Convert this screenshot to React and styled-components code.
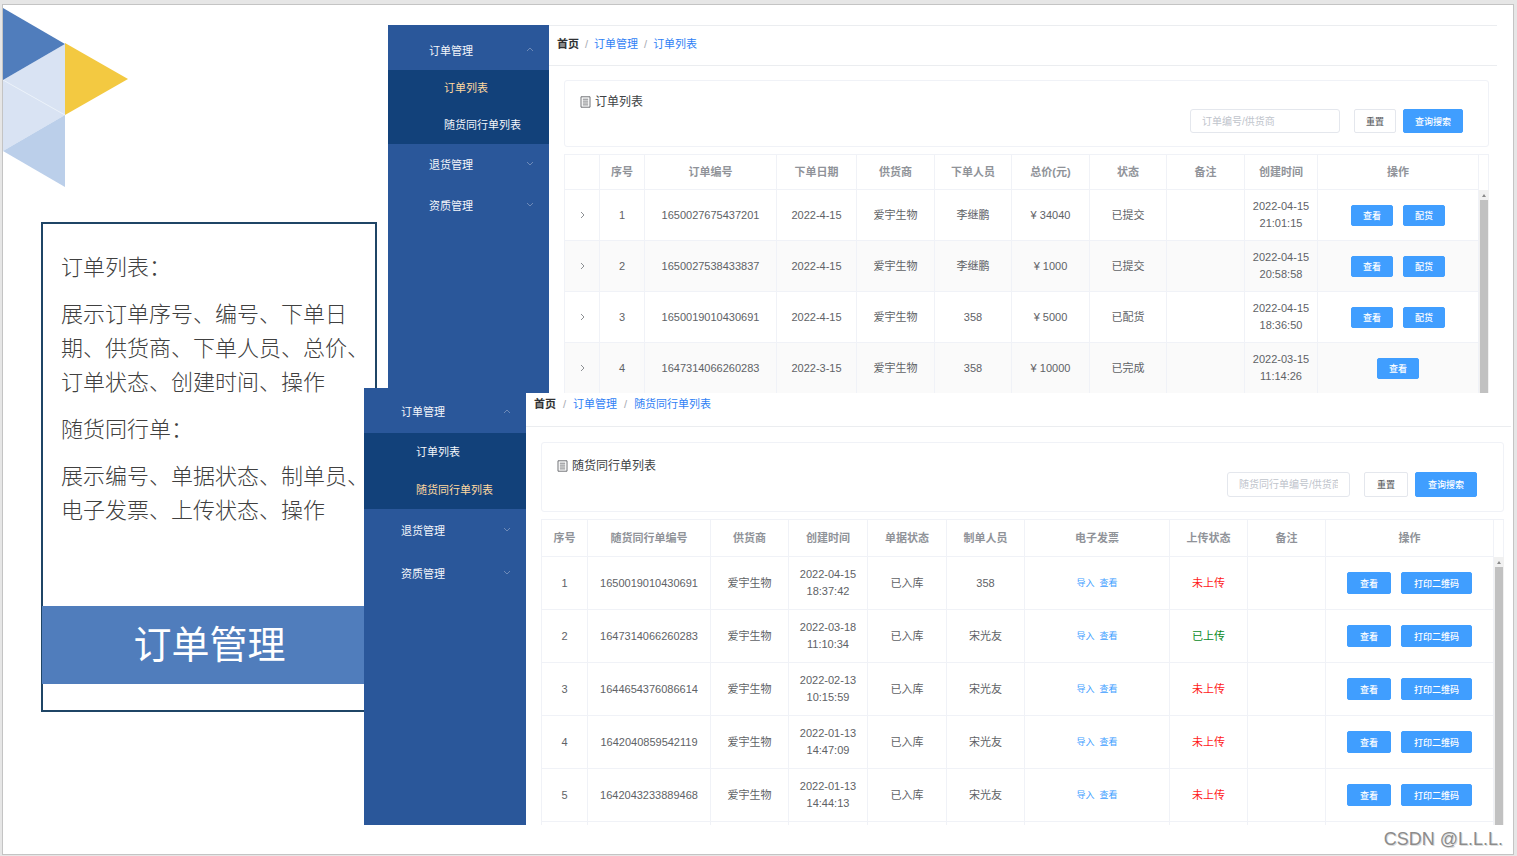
import React, { useState } from 'react';
import styled, { createGlobalStyle, ThemeProvider } from 'styled-components';

const GlobalStyle = createGlobalStyle`
  * {
    box-sizing: border-box;
  }

  body {
    margin: 0;
    background: #e6e6e6;
    font-family: "Liberation Sans", "Noto Sans CJK SC", sans-serif;
    font-size: 11px;
    color: #606266;
  }

  button,
  input {
    font-family: inherit;
  }

  a {
    text-decoration: none;
  }
`;

// 两个窗口的尺寸
const compact = {
  sidebar: 161,
  menuIndent: 41,
  subIndent: 56,
  firstTop: 4,
  item: 41,
  subItem: 37,
  crumbHeight: 36,
  crumbBottom: 3,
  crumbGap: 6,
  contentTop: 14,
  contentRight: 8,
  cardHeight: 67,
  cardPadding: '12px 25px 13px 15px',
  input: 150,
  control: 24,
  button: 21,
  buttonPadding: 11,
  headRow: 35,
  row: 51,
};

const roomy = {
  sidebar: 162,
  menuIndent: 37,
  subIndent: 52,
  firstTop: 1,
  item: 43,
  subItem: 38,
  crumbHeight: 23,
  crumbBottom: 10,
  crumbGap: 7,
  contentTop: 15,
  contentRight: 7,
  cardHeight: 70,
  cardPadding: '14px 26px 14px 15px',
  input: 123,
  control: 25,
  button: 22,
  buttonPadding: 12,
  headRow: 37,
  row: 53,
};

const Slide = styled.div`
  display: grid;
  grid-template-columns: 374px minmax(0, 1fr);
  margin: 4px 3px 1px 2px;
  border: 1px solid #c4c4c4;
  background: #fff;
`;

const Intro = styled.aside`
  padding-top: 3px;
`;

const Triangles = styled.svg`
  display: block;
  width: 126px;
  height: 179px;
`;

const IntroCard = styled.section`
  margin: 35px 0 0 38px;
  padding: 24px 0 26px;
  border: 2px solid #1f4566;
`;

const IntroText = styled.div`
  display: flex;
  flex-direction: column;
  gap: 13px;
  padding: 0 5px 0 18px;
  font-family: "Noto Sans CJK SC", sans-serif;
  font-size: 22px;
  font-weight: 300;
  line-height: 34px;
  color: #404040;

  p {
    margin: 0;
  }
`;

const IntroTitle = styled.h1`
  margin: 81px -2px 0 -1px;
  padding-bottom: 6px;
  font-family: "Noto Sans CJK SC", sans-serif;
  font-size: 38px;
  font-weight: 400;
  line-height: 72px;
  text-align: center;
  color: #fff;
  background: #507dbc;
`;

const Windows = styled.main`
  display: flex;
  flex-direction: column;
  padding-top: 20px;
`;

const Window = styled.section`
  display: flex;
  margin: ${(p) => (p.$front ? '-6px 2px 0 -13px' : '0 16px 0 11px')};
  z-index: ${(p) => (p.$front ? 1 : 0)};
`;

const Sidebar = styled.nav`
  flex: none;
  width: ${(p) => p.theme.sidebar}px;
  background: #2a579a;
`;

const MenuButton = styled.button`
  display: flex;
  align-items: center;
  justify-content: space-between;
  width: 100%;
  height: ${(p) => (p.$first ? 45 : p.theme.item)}px;
  padding: ${(p) => (p.$first ? p.theme.firstTop : 0)}px 15px ${(p) => (p.$first ? 0 : 2)}px ${(p) => p.theme.menuIndent}px;
  border: 0;
  background: none;
  font-size: 11px;
  color: #f4f6fa;
  cursor: pointer;
`;

const SubMenu = styled.div`
  background: #12417a;
`;

const SubLink = styled.a`
  display: block;
  padding-left: ${(p) => p.theme.subIndent}px;
  line-height: ${(p) => p.theme.subItem}px;
  color: ${(p) => (p.$active ? '#ffd9a0' : '#f4f6fa')};
`;

const Main = styled.div`
  flex: 1;
  min-width: 0;
  margin-top: ${(p) => (p.$front ? 5 : 0)}px;
  border-top: ${(p) => (p.$front ? 0 : 1)}px solid #ebedf0;
  background: #fff;
`;

const Breadcrumb = styled.nav`
  display: flex;
  gap: ${(p) => p.theme.crumbGap}px;
  padding: 0 0 ${(p) => p.theme.crumbBottom}px 8px;
  border-bottom: 1px solid #ebedf0;
  line-height: ${(p) => p.theme.crumbHeight}px;

  a {
    color: #2f7ff5;
  }

  a:first-child {
    font-weight: 700;
    color: #303133;
  }

  span {
    color: #a8abb2;
  }
`;

const Content = styled.div`
  display: flex;
  flex-direction: column;
  gap: 7px;
  padding: ${(p) => p.theme.contentTop}px ${(p) => p.theme.contentRight}px 0 15px;
`;

const SearchCard = styled.div`
  display: flex;
  justify-content: space-between;
  min-height: ${(p) => p.theme.cardHeight}px;
  padding: ${(p) => p.theme.cardPadding};
  border: 1px solid #f0f2f7;
  border-radius: 3px;
`;

const CardTitle = styled.h2`
  display: flex;
  align-items: center;
  align-self: flex-start;
  gap: 4px;
  margin: 0;
  font-size: 12px;
  font-weight: 400;
  line-height: 18px;
  color: #404245;
`;

const SearchForm = styled.form`
  display: flex;
  align-self: flex-end;
  gap: 7px;
`;

const SearchInput = styled.input`
  width: ${(p) => p.theme.input}px;
  height: ${(p) => p.theme.control}px;
  margin-right: 7px;
  padding: 0 11px;
  border: 1px solid #e4e7ed;
  border-radius: 3px;
  font-size: 10px;
  color: #606266;

  &::placeholder {
    color: #c0c4cc;
  }
`;

const Button = styled.button`
  height: ${(p) => (p.$small ? p.theme.button : p.theme.control)}px;
  padding: 0 ${(p) => p.theme.buttonPadding}px;
  border: 1px solid ${(p) => (p.$plain ? '#e4e7ed' : '#409eff')};
  border-radius: 2px;
  background: ${(p) => (p.$plain ? '#fff' : '#409eff')};
  font-size: 9px;
  font-weight: 500;
  color: ${(p) => (p.$plain ? '#606266' : '#fff')};
  cursor: pointer;
`;

const TableBox = styled.div`
  display: flex;
  border-top: 1px solid #f0f2f7;
  border-left: 1px solid #f0f2f7;
`;

const Table = styled.table`
  flex: 1;
  width: 0;
  table-layout: fixed;
  border-collapse: separate;
  border-spacing: 0;
  text-align: center;
  line-height: 17px;

  th,
  td {
    padding: 0;
    border-right: 1px solid #f0f2f7;
    border-bottom: 1px solid #f0f2f7;
  }

  th {
    height: ${(p) => p.theme.headRow}px;
    color: #909399;
  }

  td {
    height: ${(p) => p.theme.row}px;
  }
`;

const Row = styled.tr`
  background: ${(p) => (p.$striped ? '#fafafa' : '#fff')};
`;

// 下一行只露出上边缘
const PeekRow = styled.tr`
  && td {
    height: 3px;
    border-bottom: 0;
  }
`;

const DateTime = styled.time`
  display: block;
  width: 60px;
  margin: 0 auto;
`;

const Actions = styled.div`
  display: flex;
  justify-content: center;
  gap: 10px;
`;

const Links = styled.div`
  display: flex;
  justify-content: center;
  gap: 5px;
  font-size: 9px;

  a {
    color: #409eff;
  }
`;

const Status = styled.span`
  color: ${(p) => (p.$done ? '#0a8a1f' : '#ff1a1a')};
`;

const ExpandButton = styled.button`
  display: block;
  margin: 0 auto;
  padding: 4px;
  border: 0;
  background: none;
  cursor: pointer;

  svg {
    display: block;
  }
`;

const Scroll = styled.div`
  display: flex;
  flex-direction: column;
  flex: none;
  width: 10px;
`;

const ScrollHead = styled.div`
  height: ${(p) => p.theme.headRow}px;
  border-right: 1px solid #f0f2f7;
`;

const ScrollTrack = styled.div`
  display: flex;
  flex: 1;
  flex-direction: column;
  align-items: center;
  gap: 3px;
  padding-top: 4px;
  background: #f1f1f1;

  svg {
    flex: none;
  }
`;

const ScrollThumb = styled.div`
  flex: 1;
  width: 8px;
  background: #c1c1c1;
`;

const Watermark = styled.footer`
  padding-right: 10px;
  font-size: 18px;
  line-height: 29px;
  text-align: right;
  color: #8c8c8c;
  text-shadow: 1px 1px 0 #dcdcdc;
`;

const Chevron = ({ up }) => (
  <svg width="8" height="5" viewBox="0 0 8 5" fill="none" stroke="#7f97c0" aria-hidden="true">
    <path d={up ? 'M1 4 4 1l3 3' : 'M1 1l3 3 3-3'} strokeWidth="0.8" />
  </svg>
);

const DocIcon = () => (
  <svg width="11" height="12" viewBox="0 0 11 12" fill="none" stroke="#606266" aria-hidden="true">
    <path d="M1 .8h9v10.4H1z" strokeWidth="0.9" />
    <path d="M2.8 3.2h5.4M2.8 5.1h5.4M2.8 7h5.4M2.8 8.9h5.4" strokeWidth="0.8" />
  </svg>
);

const orderColumns = [
  ['', 35],
  ['序号', 45],
  ['订单编号', 132],
  ['下单日期', 80],
  ['供货商', 78],
  ['下单人员', 77],
  ['总价(元)', 78],
  ['状态', 77],
  ['备注', 78],
  ['创建时间', 73],
  ['操作', 161],
];

const orders = [
  { no: '1650027675437201', date: '2022-4-15', person: '李继鹏', total: '34040', status: '已提交', created: '2022-04-15 21:01:15' },
  { no: '1650027538433837', date: '2022-4-15', person: '李继鹏', total: '1000', status: '已提交', created: '2022-04-15 20:58:58' },
  { no: '1650019010430691', date: '2022-4-15', person: '358', total: '5000', status: '已配货', created: '2022-04-15 18:36:50' },
  { no: '1647314066260283', date: '2022-3-15', person: '358', total: '10000', status: '已完成', created: '2022-03-15 11:14:26' },
];

const noteColumns = [
  ['序号', 46],
  ['随货同行单编号', 123],
  ['供货商', 78],
  ['创建时间', 79],
  ['单据状态', 79],
  ['制单人员', 78],
  ['电子发票', 145],
  ['上传状态', 78],
  ['备注', 78],
  ['操作', 168],
];

const notes = [
  { no: '1650019010430691', created: '2022-04-15 18:37:42', person: '358', uploaded: false },
  { no: '1647314066260283', created: '2022-03-18 11:10:34', person: '宋光友', uploaded: true },
  { no: '1644654376086614', created: '2022-02-13 10:15:59', person: '宋光友', uploaded: false },
  { no: '1642040859542119', created: '2022-01-13 14:47:09', person: '宋光友', uploaded: false },
  { no: '1642043233889468', created: '2022-01-13 14:44:13', person: '宋光友', uploaded: false },
];

const SideMenu = ({ active }) => {
  const [open, setOpen] = useState(true);

  return (
    <Sidebar>
      <MenuButton $first type="button" aria-expanded={open} onClick={() => setOpen(!open)}>
        订单管理
        <Chevron up={open} />
      </MenuButton>
      {open && (
        <SubMenu>
          {['订单列表', '随货同行单列表'].map((name) => (
            <SubLink key={name} href="#" $active={name === active}>{name}</SubLink>
          ))}
        </SubMenu>
      )}
      <MenuButton type="button">退货管理<Chevron /></MenuButton>
      <MenuButton type="button">资质管理<Chevron /></MenuButton>
    </Sidebar>
  );
};

const SearchPanel = ({ title, placeholder }) => {
  const [query, setQuery] = useState('');

  return (
    <SearchCard>
      <CardTitle><DocIcon />{title}</CardTitle>
      <SearchForm onSubmit={(e) => e.preventDefault()}>
        <SearchInput
          aria-label={placeholder}
          placeholder={placeholder}
          value={query}
          onChange={(e) => setQuery(e.target.value)}
        />
        <Button $plain type="button" onClick={() => setQuery('')}>重置</Button>
        <Button type="submit">查询搜索</Button>
      </SearchForm>
    </SearchCard>
  );
};

const DataTable = ({ columns, children }) => (
  <TableBox>
    <Table>
      <colgroup>
        {columns.map(([name, width]) => <col key={name} width={width} />)}
      </colgroup>
      <thead>
        <tr>
          {columns.map(([name]) => <th key={name}>{name}</th>)}
        </tr>
      </thead>
      <tbody>{children}</tbody>
    </Table>
    <Scroll>
      <ScrollHead />
      <ScrollTrack>
        <svg width="4" height="3" viewBox="0 0 4 3" aria-hidden="true">
          <path d="M0 3 2 0l2 3z" fill="#8a8a8a" />
        </svg>
        <ScrollThumb />
      </ScrollTrack>
    </Scroll>
  </TableBox>
);

const AppWindow = ({ theme, front, title, placeholder, columns, children }) => (
  <ThemeProvider theme={theme}>
    <Window $front={front}>
      <SideMenu active={title} />
      <Main $front={front}>
        <Breadcrumb>
          <a href="#">首页</a>
          <span>/</span>
          <a href="#">订单管理</a>
          <span>/</span>
          <a href="#">{title}</a>
        </Breadcrumb>
        <Content>
          <SearchPanel title={title} placeholder={placeholder} />
          <DataTable columns={columns}>{children}</DataTable>
        </Content>
      </Main>
    </Window>
  </ThemeProvider>
);

const App = () => (
  <>
    <GlobalStyle />
    <Slide>
      <Intro>
        <Triangles viewBox="0 0 126 179" aria-hidden="true">
          <path d="M0 72 62 36v71z" fill="#d9e3f3" />
          <path d="M0 72v71l62-36z" fill="#d9e3f3" />
          <path d="M0 72l62 35" stroke="#eaf1f9" />
          <path d="M0 0l62 36L0 72z" fill="#507dbc" />
          <path d="M62 35l63 36-63 36z" fill="#f3c941" />
          <path d="M0 143l62-36v72z" fill="#bbcfea" />
        </Triangles>
        <IntroCard>
          <IntroText>
            <p>订单列表：</p>
            <p>展示订单序号、编号、下单日期、供货商、下单人员、总价、订单状态、创建时间、操作</p>
            <p>随货同行单：</p>
            <p>展示编号、单据状态、制单员、电子发票、上传状态、操作</p>
          </IntroText>
          <IntroTitle>订单管理</IntroTitle>
        </IntroCard>
      </Intro>
      <Windows>
        <AppWindow theme={compact} title="订单列表" placeholder="订单编号/供货商" columns={orderColumns}>
          {orders.map((order, index) => (
            <Row key={order.no} $striped={index % 2 === 1}>
              <td>
                <ExpandButton type="button" aria-label="展开">
                  <svg width="5" height="8" viewBox="0 0 5 8" fill="none" stroke="#808388">
                    <path d="M1 1l3 3-3 3" strokeWidth="0.9" />
                  </svg>
                </ExpandButton>
              </td>
              <td>{index + 1}</td>
              <td>{order.no}</td>
              <td>{order.date}</td>
              <td>爱宇生物</td>
              <td>{order.person}</td>
              <td>¥ {order.total}</td>
              <td>{order.status}</td>
              <td />
              <td><DateTime>{order.created}</DateTime></td>
              <td>
                <Actions>
                  <Button $small type="button">查看</Button>
                  {order.status !== '已完成' && <Button $small type="button">配货</Button>}
                </Actions>
              </td>
            </Row>
          ))}
        </AppWindow>
        <AppWindow front theme={roomy} title="随货同行单列表" placeholder="随货同行单编号/供货商" columns={noteColumns}>
          {notes.map((note, index) => (
            <Row key={note.no}>
              <td>{index + 1}</td>
              <td>{note.no}</td>
              <td>爱宇生物</td>
              <td><DateTime>{note.created}</DateTime></td>
              <td>已入库</td>
              <td>{note.person}</td>
              <td>
                <Links>
                  <a href="#">导入</a>
                  <a href="#">查看</a>
                </Links>
              </td>
              <td><Status $done={note.uploaded}>{note.uploaded ? '已上传' : '未上传'}</Status></td>
              <td />
              <td>
                <Actions>
                  <Button $small type="button">查看</Button>
                  <Button $small type="button">打印二维码</Button>
                </Actions>
              </td>
            </Row>
          ))}
          <PeekRow>
            {noteColumns.map(([name]) => <td key={name} />)}
          </PeekRow>
        </AppWindow>
        <Watermark>CSDN @L.L.L.</Watermark>
      </Windows>
    </Slide>
  </>
);

export default App;
